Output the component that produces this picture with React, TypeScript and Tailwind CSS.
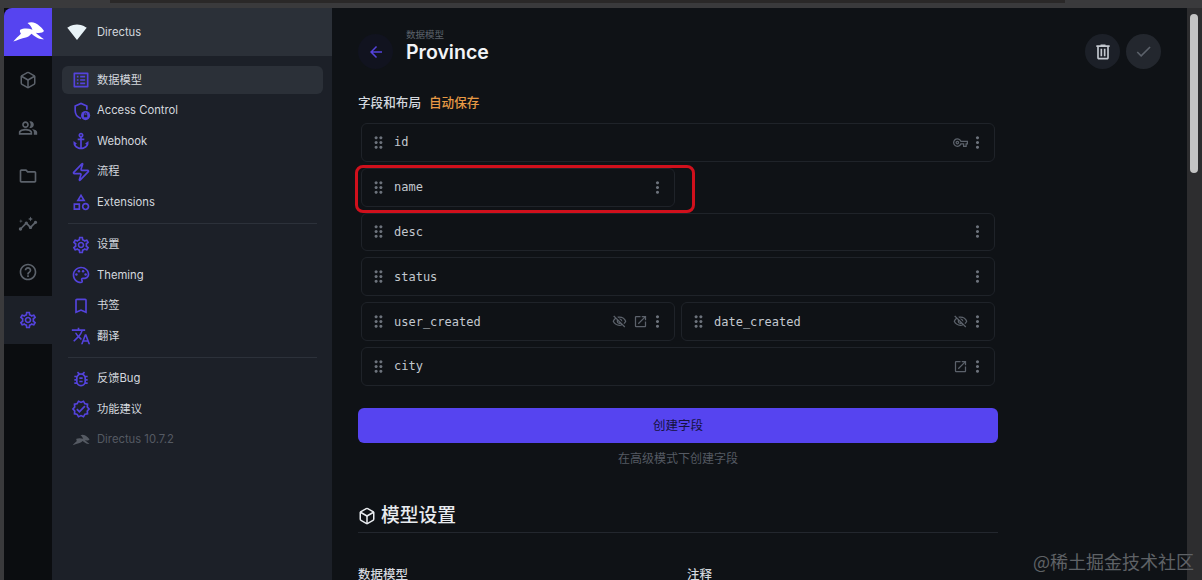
import {
  MdArrowBack,
  MdCheck,
  MdDragIndicator,
  MdMoreVert,
  MdOutlineAnchor,
  MdOutlineBookmarkBorder,
  MdOutlineBugReport,
  MdOutlineCategory,
  MdOutlineFolder,
  MdOutlineHelpOutline,
  MdOutlineInsights,
  MdOutlineListAlt,
  MdOutlineOpenInNew,
  MdOutlinePalette,
  MdOutlinePeopleAlt,
  MdOutlineSettings,
  MdOutlineTranslate,
  MdOutlineVerified,
  MdOutlineVisibilityOff,
  MdOutlineVpnKey,
  MdSignalWifi4Bar,
} from "react-icons/md";
import { LuBox, LuZap } from "react-icons/lu";
import type { ComponentType, ReactNode } from "react";

const CJK = "font-['Inter','Noto_Sans_CJK_SC',sans-serif]";

const Rabbit = ({ className }: { className?: string }) => (
  <svg viewBox="33 62 100 66" className={className} fill="currentColor">
    <path d="M37 124 C44 114 52 108 60 100 C57 95 56 91 58 88 C66 84 82 83 95 88 C92 80 88 74 80 68 C90 63 104 64 118 78 C123 82 128 87 130 92 C127 97 118 99 105 97 C112 104 121 110 130 117 C121 118 114 116 108 112 C102 108 97 104 92 100 C87 106 81 110 75 112 C62 115 50 120 37 124 Z" />
  </svg>
);

const ShieldLock = ({ className }: { className?: string }) => (
  <svg viewBox="0 0 24 24" className={className} fill="none">
    <path d="M19 10.5V6l-7-3-7 3v5.5c0 4.2 2.8 8 7 9.5" stroke="currentColor" strokeWidth="2" />
    <circle cx="17.5" cy="17.5" r="5.5" fill="currentColor" />
    <rect x="15.5" y="16.5" width="4" height="3" fill="#1c2028" />
    <path d="M16.3 16.5v-1a1.2 1.2 0 0 1 2.4 0v1" stroke="#1c2028" strokeWidth="0.8" />
  </svg>
);

// trash with the two inner bars
const Trash = ({ className }: { className?: string }) => (
  <svg viewBox="0 0 24 24" className={className} fill="currentColor">
    <path d="M7 21q-.8 0-1.4-.6T5 19V6H4V4h5V3h6v1h5v2h-1v13q0 .8-.6 1.4T17 21ZM17 6H7v13h10ZM9 17h2V8H9Zm4 0h2V8h-2Z" />
  </svg>
);

type IconType = ComponentType<{ className?: string }>;

const NavItem = ({
  icon: Icon,
  label,
  active,
}: {
  icon: IconType;
  label: string;
  active?: boolean;
}) => (
  <div
    className={`flex h-[28px] items-center gap-[6px] rounded-md pl-[9px] text-[11.25px] text-[#d4d8df] ${
      active ? "bg-[#2b3038]" : ""
    }`}
  >
    <Icon className="h-[20px] w-[20px] shrink-0 text-[#5443dc]" />
    <span>{label}</span>
  </div>
);

const Divider = () => <div className="mx-[6px] my-[4px] h-px bg-[#2c313a]" />;

const FieldRow = ({
  name,
  icons = [],
  className = "",
}: {
  name: string;
  icons?: IconType[];
  className?: string;
}) => (
  <div
    className={`flex h-[38.8px] items-center rounded-md border border-[#1f2329] bg-[#0f1216] pr-[7px] pl-[6.5px] ${className}`}
  >
    <MdDragIndicator className="h-[19px] w-[19px] shrink-0 text-[#6d737c]" />
    <span className="ml-[6.5px] font-['DejaVu_Sans_Mono',monospace] text-[12px] text-[#c3c8cf]">
      {name}
    </span>
    <div className="ml-auto flex items-center gap-[5.7px] text-[#5c626b]">
      {icons.map((Icon, i) => (
        <Icon key={i} className="h-[15px] w-[15px]" />
      ))}
    </div>
    <MdMoreVert className="h-[19px] w-[19px] shrink-0 text-[#6d737c]" />
  </div>
);

const ModuleIcon = ({ children, active }: { children: ReactNode; active?: boolean }) => (
  <div
    className={`flex h-[48px] items-center justify-center ${
      active ? "bg-[#1c2028] text-[#5443dc]" : "text-[#5c626b]"
    }`}
  >
    {children}
  </div>
);

export default function App() {
  return (
    <div
      className={`relative flex h-[580px] w-[1202px] overflow-hidden bg-[#3a3a3c] pt-[8px] pl-[4px] ${CJK}`}
    >
      {/* module bar */}
      <div className="flex w-[48px] shrink-0 flex-col bg-[#0b0d10]">
        <div className="flex h-[48px] items-center justify-center rounded-tl-lg bg-[#5644f0] text-white">
          <Rabbit className="h-[22px] w-[33px]" />
        </div>
        <div className="flex flex-col">
          <ModuleIcon>
            <LuBox className="h-[18px] w-[18px]" />
          </ModuleIcon>
          <ModuleIcon>
            <MdOutlinePeopleAlt className="h-[20px] w-[20px]" />
          </ModuleIcon>
          <ModuleIcon>
            <MdOutlineFolder className="h-[20px] w-[20px]" />
          </ModuleIcon>
          <ModuleIcon>
            <MdOutlineInsights className="h-[20px] w-[20px]" />
          </ModuleIcon>
          <ModuleIcon>
            <MdOutlineHelpOutline className="h-[20px] w-[20px]" />
          </ModuleIcon>
          <ModuleIcon active>
            <MdOutlineSettings className="h-[20px] w-[20px]" />
          </ModuleIcon>
        </div>
      </div>

      {/* sidebar */}
      <div className="flex w-[280px] shrink-0 flex-col bg-[#1c2028]">
        <div className="flex h-[48px] items-center gap-[10px] bg-[#2b3038] pl-[15px] text-[11.25px] text-[#d4d8df]">
          <MdSignalWifi4Bar className="h-[20px] w-[20px] text-[#e8f2f7]" />
          <span>Directus</span>
        </div>
        <div className="flex flex-col gap-[2.6px] pt-[10px] pr-[9px] pl-[10px]">
          <NavItem icon={MdOutlineListAlt} label="数据模型" active />
          <NavItem icon={ShieldLock} label="Access Control" />
          <NavItem icon={MdOutlineAnchor} label="Webhook" />
          <NavItem icon={LuZap} label="流程" />
          <NavItem icon={MdOutlineCategory} label="Extensions" />
          <Divider />
          <NavItem icon={MdOutlineSettings} label="设置" />
          <NavItem icon={MdOutlinePalette} label="Theming" />
          <NavItem icon={MdOutlineBookmarkBorder} label="书签" />
          <NavItem icon={MdOutlineTranslate} label="翻译" />
          <Divider />
          <NavItem icon={MdOutlineBugReport} label="反馈Bug" />
          <NavItem icon={MdOutlineVerified} label="功能建议" />
          <div className="flex h-[28px] items-center gap-[7px] pl-[10px] text-[11.25px] text-[#555a63]">
            <Rabbit className="h-[12px] w-[18px]" />
            <span>Directus 10.7.2</span>
          </div>
        </div>
      </div>

      {/* main */}
      <div className="flex min-w-0 flex-1 flex-col bg-[#0f1216] px-[26px]">
        <div className="flex items-start pt-[26px]">
          <div className="flex h-[35px] w-[35px] items-center justify-center rounded-full bg-[#11131f] text-[#5443dc]">
            <MdArrowBack className="h-[18px] w-[18px]" />
          </div>
          <div className="-mt-[4px] ml-[13px] flex flex-col">
            <span className="text-[9.5px] leading-[10px] text-[#5c626b]">数据模型</span>
            <span className="text-[19.5px] leading-[24px] font-semibold text-[#f2f4f7]">Province</span>
          </div>
          <div className="ml-auto flex gap-[6px]">
            <div className="flex h-[35px] w-[35px] items-center justify-center rounded-full bg-[#1c2028] text-[#c3c8cf]">
              <Trash className="h-[20px] w-[20px]" />
            </div>
            <div className="flex h-[35px] w-[35px] items-center justify-center rounded-full bg-[#23272e] text-[#5c626b]">
              <MdCheck className="h-[19px] w-[19px]" />
            </div>
          </div>
        </div>

        <div className="mt-[25px] w-[640px]">
          <div className="flex gap-[8px] text-[12.6px] leading-[18px] font-medium text-[#d4d8df]">
            <span>字段和布局</span>
            <span className="text-[#e89a45]">自动保存</span>
          </div>
          <div className="mt-[11px] ml-[3px] grid w-[634px] grid-cols-2 gap-[6px]">
            <FieldRow name="id" icons={[MdOutlineVpnKey]} className="col-span-2" />
            <FieldRow name="name" />
            <div />
            <FieldRow name="desc" className="col-span-2" />
            <FieldRow name="status" className="col-span-2" />
            <FieldRow name="user_created" icons={[MdOutlineVisibilityOff, MdOutlineOpenInNew]} />
            <FieldRow name="date_created" icons={[MdOutlineVisibilityOff]} />
            <FieldRow name="city" icons={[MdOutlineOpenInNew]} className="col-span-2" />
          </div>
          <div className="mt-[22px] flex h-[35px] items-center justify-center rounded-md bg-[#5644f0] pt-[2px] text-[12.5px] text-[#15123f]">
            创建字段
          </div>
          <div className="mt-[8px] text-center text-[12px] leading-[16px] text-[#555a63]">
            在高级模式下创建字段
          </div>
        </div>

        <div className="mt-[36px] w-[640px] border-b border-[#23272e] pb-[3px]">
          <div className="flex items-center gap-[5px] text-[18.75px] leading-[26px] font-medium text-[#e8ebef]">
            <LuBox className="h-[18px] w-[18px]" />
            <span>模型设置</span>
          </div>
        </div>
        <div className="mt-[33px] flex w-[640px] text-[12.5px] font-medium text-[#d4d8df]">
          <span className="w-[329px]">数据模型</span>
          <span>注释</span>
        </div>
      </div>

      {/* scrollbar */}
      <div className="w-[15px] shrink-0 bg-[#2d2d2f] pt-[6px] pl-[3px]">
        <div className="h-[159px] w-[8px] rounded-full bg-[#c4c4c4]" />
      </div>

      {/* window edge, red annotation and watermark lie over the screenshot */}
      <div className="absolute top-0 left-[110px] h-[3px] w-[955px] bg-[#2a2828]" />
      <div className="absolute top-[165px] left-[355px] h-[48px] w-[340px] rounded-lg border-[3px] border-[#d0101c]" />
      <div className="absolute right-[8px] bottom-[6px] font-['Noto_Sans_CJK_SC',sans-serif] text-[18px] leading-[26px] text-[#5f6266]">
        @稀土掘金技术社区
      </div>
    </div>
  );
}
